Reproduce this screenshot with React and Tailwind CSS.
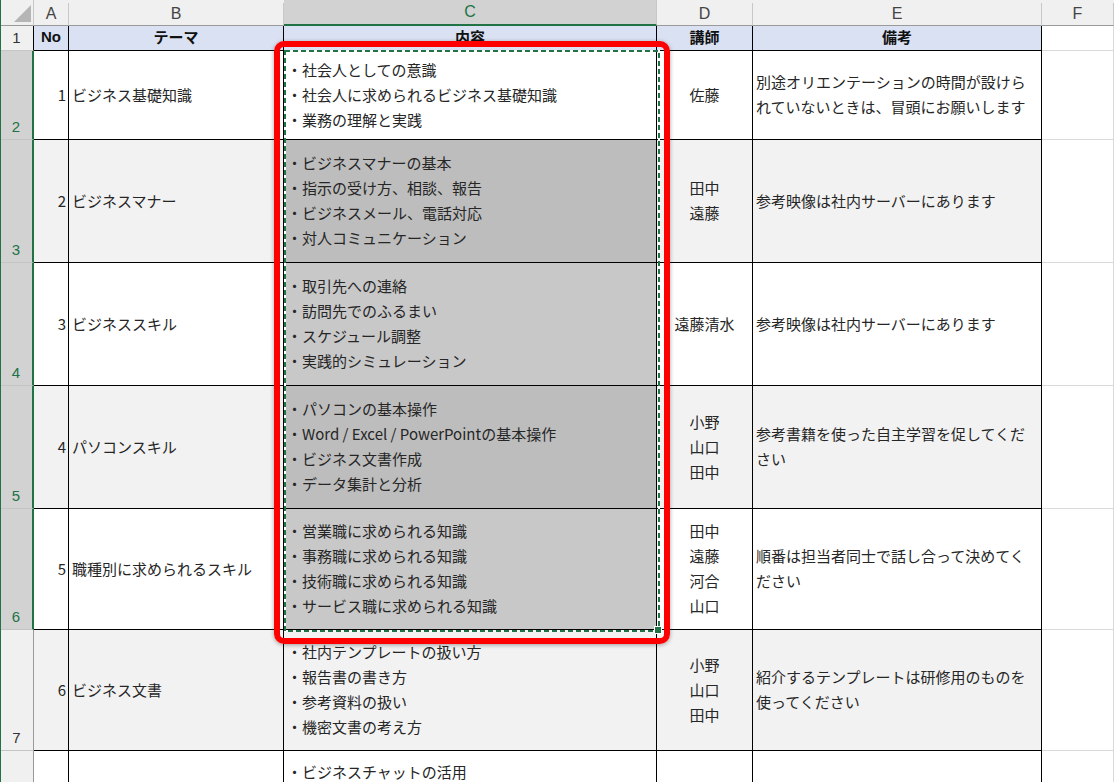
import React from "react";

const jp = "font-['Noto_Sans_CJK_JP','Noto_Sans',sans-serif]";
const ui = "font-['Liberation_Sans','Noto_Sans',sans-serif]";

const rows = [
  {
    no: 1, h: "h-[89px]", band: false,
    theme: "ビジネス基礎知識",
    items: ["社会人としての意識", "社会人に求められるビジネス基礎知識", "業務の理解と実践"],
    teachers: ["佐藤"],
    note: ["別途オリエンテーションの時間が設けら", "れていないときは、冒頭にお願いします"],
  },
  {
    no: 2, h: "h-[123px]", band: true,
    theme: "ビジネスマナー",
    items: ["ビジネスマナーの基本", "指示の受け方、相談、報告", "ビジネスメール、電話対応", "対人コミュニケーション"],
    teachers: ["田中", "遠藤"],
    note: ["参考映像は社内サーバーにあります"],
  },
  {
    no: 3, h: "h-[123px]", band: false,
    theme: "ビジネススキル",
    items: ["取引先への連絡", "訪問先でのふるまい", "スケジュール調整", "実践的シミュレーション"],
    teachers: ["遠藤清水"],
    note: ["参考映像は社内サーバーにあります"],
  },
  {
    no: 4, h: "h-[123px]", band: true,
    theme: "パソコンスキル",
    items: ["パソコンの基本操作", "Word / Excel / PowerPointの基本操作", "ビジネス文書作成", "データ集計と分析"],
    teachers: ["小野", "山口", "田中"],
    note: ["参考書籍を使った自主学習を促してくだ", "さい"],
  },
  {
    no: 5, h: "h-[121px]", band: false,
    theme: "職種別に求められるスキル",
    items: ["営業職に求められる知識", "事務職に求められる知識", "技術職に求められる知識", "サービス職に求められる知識"],
    teachers: ["田中", "遠藤", "河合", "山口"],
    note: ["順番は担当者同士で話し合って決めてく", "ださい"],
  },
  {
    no: 6, h: "h-[121px]", band: true,
    theme: "ビジネス文書",
    items: ["社内テンプレートの扱い方", "報告書の書き方", "参考資料の扱い", "機密文書の考え方"],
    teachers: ["小野", "山口", "田中"],
    note: ["紹介するテンプレートは研修用のものを", "使ってください"],
  },
];

const cols = [
  { key: "A", w: "w-[35px]" },
  { key: "B", w: "w-[215px]" },
  { key: "C", w: "w-[373px]" },
  { key: "D", w: "w-[96px]" },
  { key: "E", w: "w-[289px]" },
  { key: "F", w: "w-[72px]" },
];

function ColumnHeader() {
  return (
    <div className="flex h-[26px] bg-[#f0f0f0]">
      {/* corner */}
      <div className="relative w-[34px] shrink-0 border-r border-[#c8c8c8] border-b border-b-[#9a9a9a]">
        <svg className="absolute left-[14px] top-[5px]" width="17" height="17" viewBox="0 0 17 17">
          <polygon points="17,0 17,17 0,17" fill="#b5b5b5" />
        </svg>
      </div>
      {cols.map((c) =>
        c.key === "C" ? (
          <div
            key={c.key}
            className={`${c.w} shrink-0 flex items-center justify-center bg-[#d2d2d2] border-r border-[#c8c8c8] border-b-2 border-b-[#217346] text-[16px] text-[#217346] ${ui}`}
          >
            {c.key}
          </div>
        ) : (
          <div
            key={c.key}
            className={`${c.w} shrink-0 flex items-center justify-center mt-[3px] border-r border-[#c8c8c8] border-b border-b-[#9a9a9a] text-[16px] text-[#444] ${ui}`}
          >
            {c.key}
          </div>
        )
      )}
    </div>
  );
}

function TitleRow() {
  const head = ["No", "テーマ", "内容", "講師", "備考"];
  return (
    <div className="flex h-[25px]">
      <div className={`w-[34px] shrink-0 flex items-center justify-center bg-[#f0f0f0] border-r border-black border-b border-b-[#c6c6c6] text-[15px] text-[#333] ${ui}`}>
        1
      </div>
      {head.map((t, i) => (
        <div
          key={t}
          className={`${cols[i].w} shrink-0 flex items-center justify-center pb-px bg-[#d9e1f2] border-r border-b border-black text-[15px] font-bold text-[#111] ${i === 0 ? ui : jp}`}
        >
          {t}
        </div>
      ))}
      <div className="w-[72px] shrink-0 bg-white border-r border-b border-[#dadada]" />
    </div>
  );
}

function DataRow({ r, rowNum, selected, active }) {
  const bg = r.band ? "bg-[#f2f2f2]" : "bg-white";
  const cBg = active ? "bg-white" : selected ? (r.band ? "bg-[#bdbdbd]" : "bg-[#c8c8c8]") : bg;
  return (
    <div className={`flex ${r.h} text-[15px] leading-[25px] text-[#262626] ${jp}`}>
      <div
        className={`w-[34px] shrink-0 flex items-end justify-center pb-[5px] border-b border-[#c4c4c4] leading-none ${ui} ${
          selected ? "bg-[#d2d2d2] border-r-2 border-r-[#217346] text-[#217346]" : "bg-[#f0f0f0] border-r border-r-[#9a9a9a] text-[#333]"
        }`}
      >
        {rowNum}
      </div>
      <div className={`w-[35px] shrink-0 flex items-center justify-end pr-[2px] pb-[2px] border-r border-b border-black ${bg}`}>
        {r.no}
      </div>
      <div className={`w-[215px] shrink-0 flex items-center pl-[3px] pb-[2px] border-r border-b border-black whitespace-nowrap ${bg}`}>
        {r.theme}
      </div>
      <div className={`w-[373px] shrink-0 flex flex-col justify-center pl-[3px] pb-[2px] border-r border-b border-black whitespace-nowrap ${cBg}`}>
        {r.items.map((it) => (
          <div key={it}>・{it}</div>
        ))}
      </div>
      <div className={`w-[96px] shrink-0 flex flex-col items-center justify-center pb-[2px] border-r border-b border-black ${bg}`}>
        {r.teachers.map((t) => (
          <div key={t}>{t}</div>
        ))}
      </div>
      <div className={`w-[289px] shrink-0 flex flex-col justify-center pl-[3px] pb-[2px] border-r border-b border-black whitespace-nowrap ${bg}`}>
        {r.note.map((n) => (
          <div key={n}>{n}</div>
        ))}
      </div>
      <div className="w-[72px] shrink-0 bg-white border-r border-b border-[#dadada]" />
    </div>
  );
}

function LastRow() {
  return (
    <div className={`flex h-[121px] text-[15px] leading-[25px] text-[#262626] ${jp}`}>
      <div className="w-[34px] shrink-0 bg-[#f0f0f0] border-r border-[#9a9a9a] border-b border-b-[#c4c4c4]" />
      <div className="w-[35px] shrink-0 bg-white border-r border-b border-black" />
      <div className="w-[215px] shrink-0 bg-white border-r border-b border-black" />
      <div className="w-[373px] shrink-0 bg-white border-r border-b border-black pl-[3px] pt-[8px] whitespace-nowrap">
        <div>・ビジネスチャットの活用</div>
      </div>
      <div className="w-[96px] shrink-0 bg-white border-r border-b border-black" />
      <div className="w-[289px] shrink-0 bg-white border-r border-b border-black" />
      <div className="w-[72px] shrink-0 bg-white border-r border-b border-[#dadada]" />
    </div>
  );
}

export default function App() {
  return (
    <div className="relative w-[1114px] h-[782px] overflow-hidden bg-white border-l border-[#217346]">
      <div className="-ml-px">
        <ColumnHeader />
        <TitleRow />
        {rows.map((r, i) => (
          <DataRow key={r.no} r={r} rowNum={i + 2} selected={i < 5} active={i === 0} />
        ))}
        <LastRow />
      </div>

      {/* marching ants selection around C2:C6 */}
      <svg className="pointer-events-none absolute left-[283px] top-[50px]" width="376" height="582" viewBox="0 0 376 582">
        <rect x="1" y="1" width="374" height="580" fill="none" stroke="#ffffff" strokeWidth="2" />
        <rect x="1" y="1" width="374" height="580" fill="none" stroke="#217346" strokeWidth="2" strokeDasharray="5 3" />
      </svg>
      <div className="pointer-events-none absolute left-[654px] top-[627px] w-[6px] h-[6px] bg-[#217346] outline outline-1 outline-white" />

      {/* red highlight frame */}
      <div className="pointer-events-none absolute left-[273px] top-[41px] w-[396px] h-[603px] rounded-[10px] border-[6px] border-[#ff0000] shadow-[0_1px_4px_rgba(0,0,0,0.35)]" />
    </div>
  );
}
